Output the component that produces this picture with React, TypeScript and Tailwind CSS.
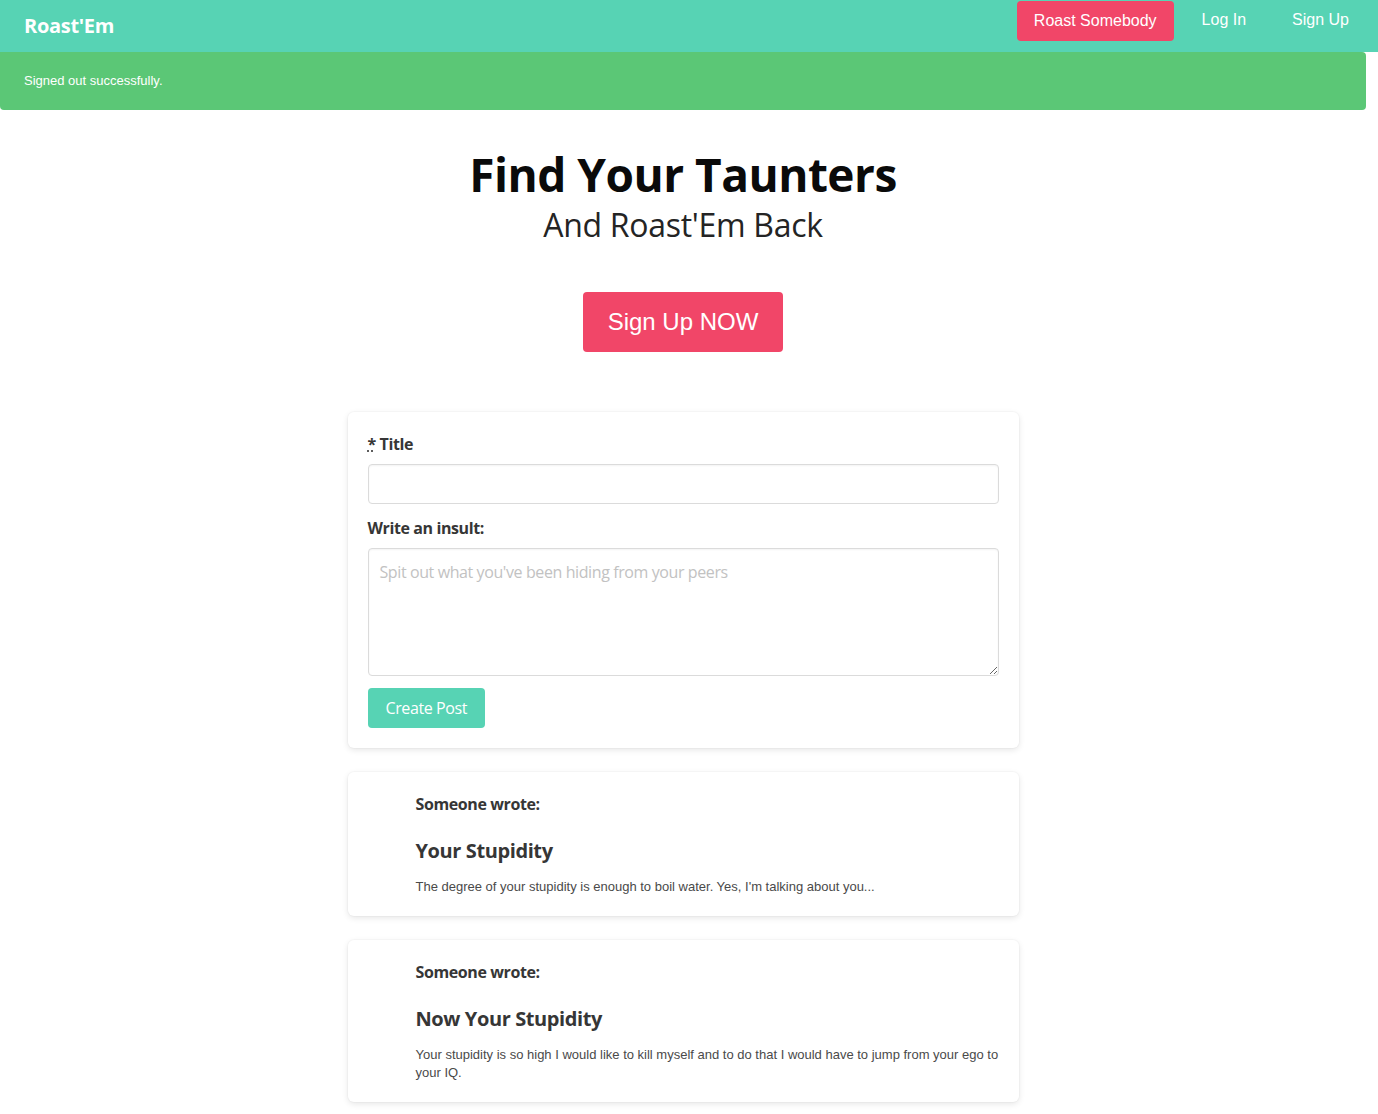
import React from 'react';

const heading = "font-['Open_Sans','Noto_Sans',sans-serif]";

function PostCard({ title, body }: { title: string; body: string }) {
  return (
    <div className="rounded-md bg-white shadow-[0_2px_6px_rgba(10,10,10,0.1),0_0_0_1px_rgba(10,10,10,0.02)] pl-[68px] pr-5 pt-[20px] pb-[20px]">
      <p className={`${heading} text-[16px] font-bold leading-6 text-[#363636] tracking-[-0.4px]`}>Someone wrote:</p>
      <h2 className={`${heading} mt-[20px] text-[20px] font-bold leading-[30px] text-[#363636] tracking-[-0.4px]`}>{title}</h2>
      <p className="mt-[12px] font-['Liberation_Sans',Arial,sans-serif] text-[13px] leading-[18px] text-[#4a4a4a]">{body}</p>
    </div>
  );
}

export default function App() {
  return (
    <div className="min-h-screen bg-white font-['Liberation_Sans',Arial,sans-serif]">
      {/* Navbar */}
      <nav className="flex h-[52px] items-stretch bg-[#57d3b4]">
        <div className="flex items-center pl-6">
          <span className={`${heading} text-[20px] font-bold text-white tracking-[-0.3px]`}>Roast'Em</span>
        </div>
        <div className="ml-auto flex items-start pr-[12px]">
          <button className="mt-[1px] h-[40px] rounded-[4px] bg-[#f14668] px-[17px] text-[16px] text-white">
            Roast Somebody
          </button>
          <a className="flex h-[40px] items-center px-[28px] text-[16px] text-white">Log In</a>
          <a className="flex h-[40px] items-center pl-[18px] pr-[17px] text-[16px] text-white">Sign Up</a>
        </div>
      </nav>

      <div className="mr-[12px]">
        {/* Notification */}
        <div className="flex h-[58px] items-center rounded-b-[4px] rounded-tr-[4px] bg-[#5bc776] pl-6">
          <span className="text-[13px] text-white">Signed out successfully.</span>
        </div>

        {/* Hero */}
        <section className="flex flex-col items-center pt-[36px]">
          <h1 className={`${heading} text-[46px] font-bold leading-[56px] text-[#0a0a0a] tracking-[-0.5px]`}>Find Your Taunters</h1>
          <h2 className={`${heading} mt-[2px] text-[32px] leading-[42px] text-[#242424] tracking-[-0.3px]`}>And Roast'Em Back</h2>
          <button className="mt-[46px] h-[60px] w-[200px] rounded-[4px] bg-[#f14668] text-[24px] text-white">
            Sign Up NOW
          </button>
        </section>

        {/* Content */}
        <main className="mx-auto mt-[60px] flex w-[671px] flex-col gap-6">
          <div className="rounded-md bg-white p-5 shadow-[0_2px_6px_rgba(10,10,10,0.1),0_0_0_1px_rgba(10,10,10,0.02)]">
            <label className={`${heading} block text-[16px] font-bold leading-6 text-[#363636] tracking-[-0.4px]`}>
              <abbr className="underline decoration-dotted" title="required">*</abbr> Title
            </label>
            <input className="mt-2 block h-[40px] w-full rounded-[4px] border border-[#dbdbdb] px-3 shadow-[inset_0_1px_2px_rgba(10,10,10,0.05)] outline-none" />
            <label className={`${heading} mt-3 block text-[16px] font-bold leading-6 text-[#363636] tracking-[-0.4px]`}>
              Write an insult:
            </label>
            <textarea
              className={`${heading} mt-2 block h-[128px] w-full rounded-[4px] border border-[#dbdbdb] px-[11px] py-[11px] text-[16px] leading-6 tracking-[-0.4px] text-[#363636] shadow-[inset_0_1px_2px_rgba(10,10,10,0.05)] outline-none placeholder:text-[#c2c2c2]`}
              placeholder="Spit out what you've been hiding from your peers"
            />
            <button className={`${heading} mt-3 h-[40px] rounded-[4px] bg-[#57d3b4] px-[18px] text-[16px] text-white tracking-[-0.4px]`}>
              Create Post
            </button>
          </div>

          <PostCard
            title="Your Stupidity"
            body="The degree of your stupidity is enough to boil water. Yes, I'm talking about you..."
          />
          <PostCard
            title="Now Your Stupidity"
            body="Your stupidity is so high I would like to kill myself and to do that I would have to jump from your ego to your IQ."
          />
        </main>
      </div>
    </div>
  );
}
